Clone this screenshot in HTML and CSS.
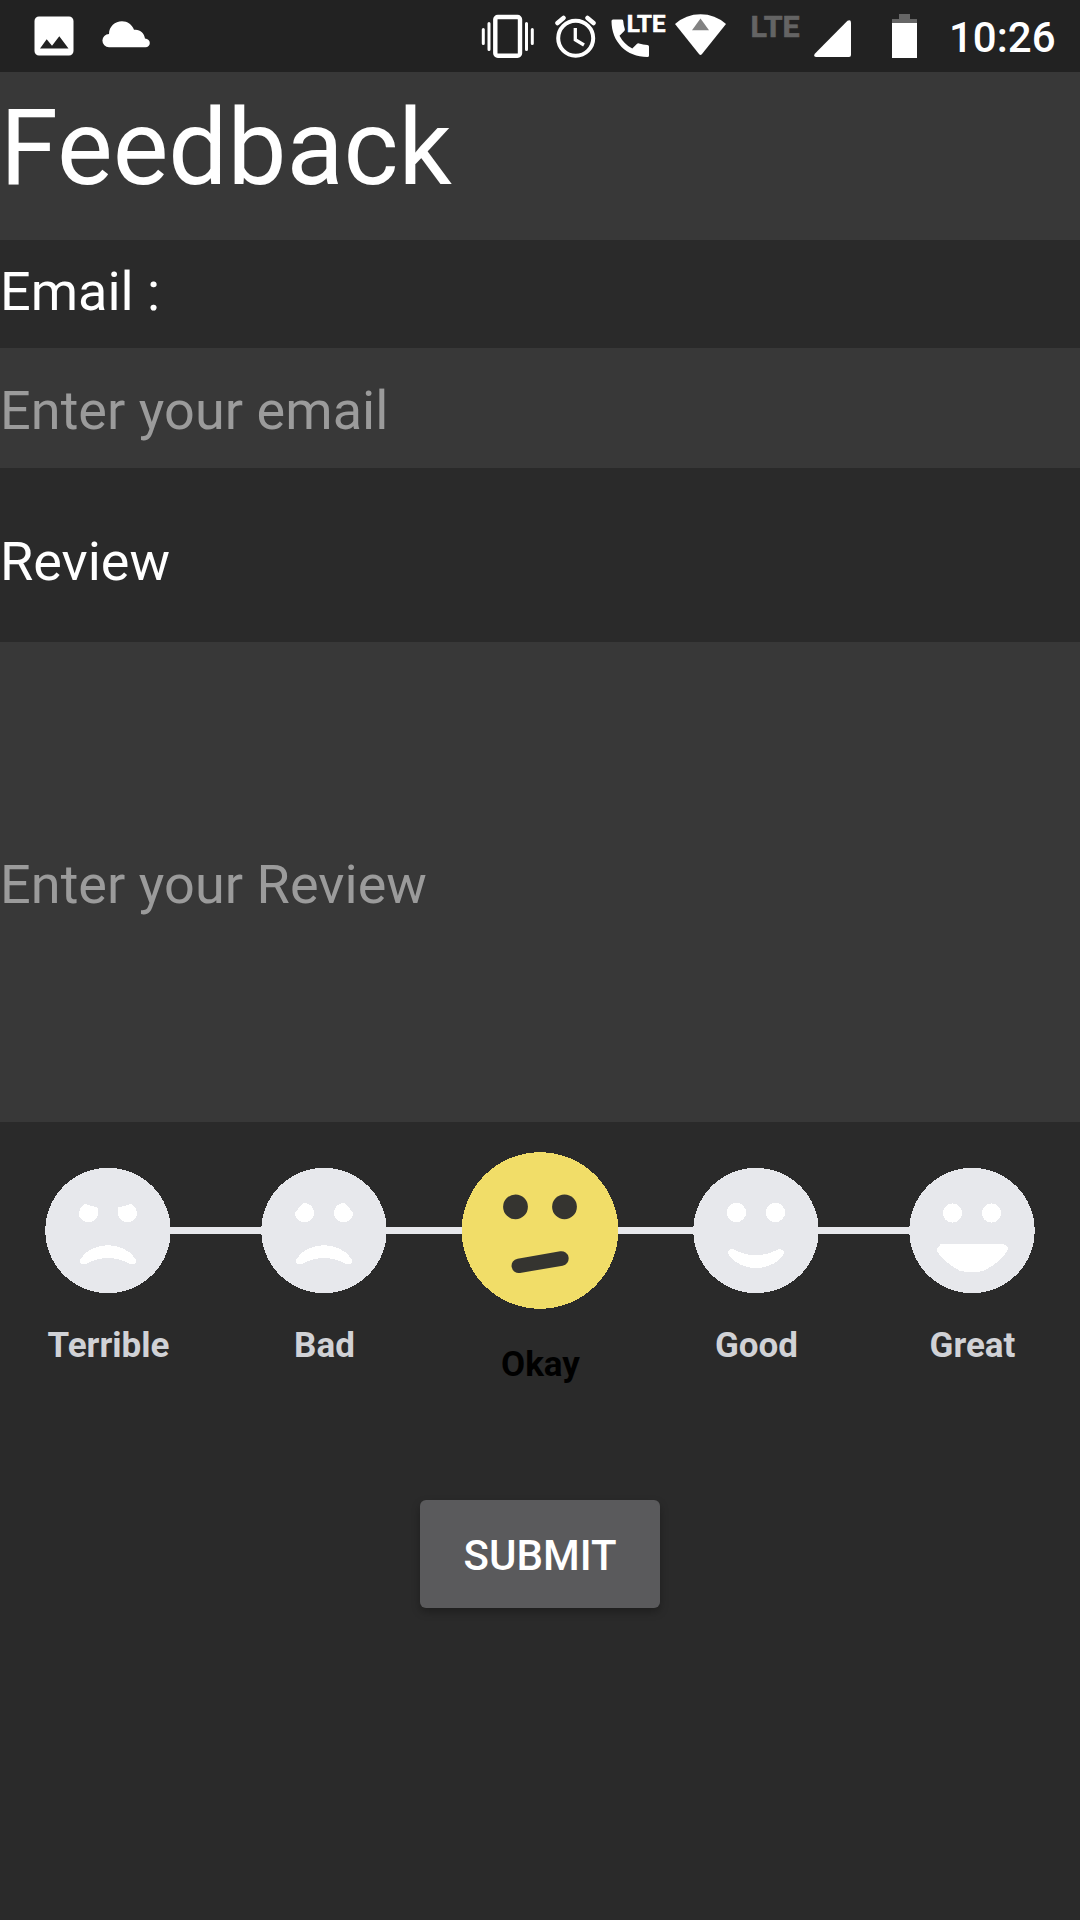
FILE: index.html
```html
<!DOCTYPE html>
<html lang="en">
<head>
<meta charset="utf-8">
<title>Feedback</title>
<link rel="stylesheet" href="styles.css">
</head>
<body>
<header class="status">
  <div class="status-left">
    <svg width="40" height="40" viewBox="34 16 40 40"><path fill="#fff" fill-rule="evenodd" d="M39 16.500H69a4.500 4.500 0 0 1 4.500 4.500V51a4.500 4.500 0 0 1-4.500 4.500H39a4.500 4.500 0 0 1-4.500-4.500V21a4.500 4.500 0 0 1 4.500-4.500ZM40 48.500H68.500L59.300 36.300 52 45.700 46.700 39.300Z"/></svg>
    <svg width="48" height="27" viewBox="102 21 48 27"><path fill="#fff" d="M109 47.200a6.600 6.600 0 0 1 0-13.200C109 26.500 115 21.300 122 21.300c5.500 0 10 3.200 12 8.500 5.500-1 10.300 3 11 8.800 3 .5 4.800 2 4.800 4.300 0 2.600-1.800 4.300-4.300 4.300Z"/></svg>
  </div>
  <div class="status-right">
    <svg class="vibrate" width="54" height="44" viewBox="481 14 54 44" fill="none" stroke="#fff"><rect x="495.300" y="17" width="24.700" height="38.700" rx="2.500" stroke-width="4.400"/><path stroke-width="3" stroke-linecap="round" d="M483.300 29.500V43.500M489 23.500V49.500M526.500 23.500V49.500M532.300 29.500V43.500"/></svg>
    <svg class="alarm" width="42" height="44" viewBox="555 15 42 44" fill="none" stroke="#fff"><circle cx="575.700" cy="38.200" r="17.500" stroke-width="4"/><path stroke-width="3.300" d="M575.300 28V39.700L584 45"/><path stroke-width="4.500" stroke-linecap="round" d="M557.500 23 563.500 18M587.500 18 593.500 23"/></svg>
    <svg class="call" width="60" height="56" viewBox="611 4 60 56"><path fill="#fff" d="M613 19.500H621.700q1.300 0 1.500 1.300.3 4.400 1.600 8.200.4 1.200-.5 2.100L619.500 35.700q4.500 8.500 12.800 12.900l4.500-4.600q1-1 2.200-.6 4 1.300 8.400 1.500 1.600.2 1.600 1.600V55.500q0 1.500-1.600 1.500C626.500 57 611.500 42 611.500 21q0-1.500 1.500-1.500Z"/><text class="lte" x="626.700" y="32.200" font-size="23" textLength="38.700" lengthAdjust="spacingAndGlyphs" fill="#fff" stroke="#fff">LTE</text></svg>
    <svg class="wifi" width="52" height="43" viewBox="675 14 52 43"><path fill="#fff" d="M675 24Q686 14.300 700.500 14.300T726 24L701.800 54.300q-1.300 1.300-2.600 0Z"/><path fill="#828282" d="M700.500 18.500 709 30.300H692Z"/></svg>
    <svg class="net" width="56" height="46" viewBox="747 4 56 46"><text class="lte" x="750.600" y="36.900" font-size="29" textLength="49" lengthAdjust="spacingAndGlyphs" fill="#646464" stroke="#646464">LTE</text></svg>
    <svg class="signal" width="38" height="38" viewBox="814 20 38 38"><path fill="#fff" d="M847.500 20.800q3.500-1.500 3.500 2V55q0 2-2 2H816q-3-.3-1.200-3.300Z"/></svg>
    <svg class="battery" width="25" height="44" viewBox="892 14 25 44" shape-rendering="crispEdges"><path fill="#666" d="M899 14h11v5h7v4H892v-4h7Z"/><path fill="#fff" d="M892 23h25V58H892Z"/></svg>
    <span class="clock">10:26</span>
  </div>
</header>
<main>
  <h1 class="title">Feedback</h1>
  <label class="label label-email" for="email">Email :</label>
  <input class="field" id="email" type="email" placeholder="Enter your email">
  <label class="label label-review" for="review">Review</label>
  <textarea class="field field-review" id="review" placeholder="Enter your Review"></textarea>
  <section class="rating">
    <div class="option">
      <svg class="face" viewBox="-78 -78.500 156 157"><circle class="disc" r="62.700"/><g class="mark"><path d="M-23-26.500-10.500-23Q-8.500-17.500-11.500-12.500-15-8.200-19.500-8.200-26-8.500-28.500-14-30.500-22-23-26.500ZM23-26.500 10.500-23Q8.500-17.500 11.500-12.500 15-8.200 19.500-8.200 26-8.500 28.500-14 30.500-22 23-26.500Z"/><path d="M-28 29C-22 19-10 14.700 0 14.700S22 19 28 29C28.500 33 26 34.300 22 33.300 14 29 8 27.700 0 27.700S-14 29-22 33.300C-26 34.500-28.500 33-28 29Z"/></g></svg>
      <span class="name">Terrible</span>
    </div>
    <div class="option">
      <svg class="face" viewBox="-78 -78.500 156 157"><circle class="disc" r="62.700"/><g class="mark"><path d="M-21-27.300Q-16-28-12.500-24.500-8-18-11.500-12.500-15-8-19.500-8.200-25-8.200-28-13-29.500-16-28.500-18.500ZM21-27.300Q16-28 12.500-24.500 8-18 11.500-12.500 15-8 19.500-8.200 25-8.200 28-13 29.500-16 28.500-18.500Z"/><path d="M-28 29C-22 19-10 14.700 0 14.700S22 19 28 29C28.500 33 26 34.300 22 33.300 14 29 8 27.700 0 27.700S-14 29-22 33.300C-26 34.500-28.500 33-28 29Z"/></g></svg>
      <span class="name">Bad</span>
    </div>
    <div class="option selected">
      <svg class="face" viewBox="-78 -78.500 156 157"><circle class="disc" r="78.300"/><circle class="eye" cx="-24.500" cy="-23.700" r="12.400"/><circle class="eye" cx="24.500" cy="-23.700" r="12.400"/><path class="mouth" d="M-21.200 35.300 21.400 28"/></svg>
      <span class="name">Okay</span>
    </div>
    <div class="option">
      <svg class="face" viewBox="-78 -78.500 156 157"><circle class="disc" r="62.700"/><g class="mark"><circle cx="-19.500" cy="-18" r="9.600"/><circle cx="19.500" cy="-18" r="9.600"/><path transform="translate(0 52.300) scale(1 -1)" d="M-28 29C-22 19-10 14.700 0 14.700S22 19 28 29C28.500 33 26 34.300 22 33.300 14 29 8 27.700 0 27.700S-14 29-22 33.300C-26 34.500-28.500 33-28 29Z"/></g></svg>
      <span class="name">Good</span>
    </div>
    <div class="option">
      <svg class="face" viewBox="-78 -78.500 156 157"><circle class="disc" r="62.700"/><g class="mark"><circle cx="-19.500" cy="-17.500" r="9.600"/><circle cx="19.500" cy="-17.500" r="9.600"/><path d="M-31.500 13.700H31.500Q36.500 15 35.800 19.500C32 27 22 35 12.500 40 5 42.500-5 42.500-12.500 40-22 35-32 27-35.800 19.500-36.500 15-31.500 13.700Z"/></g></svg>
      <span class="name">Great</span>
    </div>
  </section>
  <button class="submit" type="button">SUBMIT</button>
</main>
</body>
</html>
```
FILE: styles.css
```css
* { box-sizing: border-box; }

body {
  margin: 0;
  height: 1920px;
  background: #2a2a2a;
  color: #fff;
  font-family: Roboto, sans-serif;
  overflow: hidden;
}

svg { display: block; flex: none; }

.status {
  height: 72px;
  background: #222;
  display: flex;
  justify-content: space-between;
}

.status-left {
  display: flex;
  align-items: flex-start;
  gap: 28px;
  padding: 16px 0 0 34px;
}

.status-left svg + svg { margin-top: 5px; }

.status-right {
  display: flex;
  align-items: flex-start;
  padding: 4px 25px 0 0;
}

.vibrate { margin-top: 10px; }
.alarm { margin: 11px 0 0 20px; }
.call { margin-left: 14px; }
.wifi { margin: 10px 0 0 4px; }
.net { margin-left: 20px; }
.signal { margin: 16px 0 0 11px; }
.battery { margin: 10px 0 0 40px; }

.lte { font-family: Roboto, sans-serif; font-weight: 700; stroke-width: .6px; }

.clock {
  width: 106px;
  margin: 10px 0 0 32px;
  font-size: 42px;
  font-weight: 500;
  line-height: 48px;
}

main {
  display: flex;
  flex-direction: column;
}

.title {
  margin: 0;
  height: 168px;
  background: #383838;
  font-size: 105px;
  font-weight: 400;
  line-height: 154px;
}

.label { font-size: 54px; }
.label-email { height: 108px; line-height: 103px; }
.label-review { height: 174px; line-height: 187px; }

.field {
  display: block;
  width: 100%;
  height: 120px;
  margin: 0;
  padding: 4px 0 0;
  border: 0;
  border-radius: 0;
  outline: 0;
  resize: none;
  background: #383838;
  color: #fff;
  font: 54px/64px Roboto, sans-serif;
  letter-spacing: .06px;
}

.field::placeholder { color: #9b9b9b; opacity: 1; }

.field-review { height: 480px; padding-top: 211px; }

.rating {
  position: relative;
  display: grid;
  grid-template-columns: repeat(5, 1fr);
  height: 300px;
  padding-top: 30px;
}

/* Connecting line behind the faces */
.rating::before {
  content: "";
  position: absolute;
  top: 105px;
  left: 10%;
  right: 10%;
  height: 7px;
  background: #e7e8ec;
}

.option {
  position: relative;
  display: flex;
  flex-direction: column;
  align-items: center;
}

.face { width: 156px; height: 157px; }
.disc { fill: #e7e8ec; shape-rendering: crispEdges; }
.mark { fill: #fff; shape-rendering: crispEdges; }

.name {
  margin-top: 17px;
  padding-left: 1px;
  font-size: 35px;
  font-weight: 700;
  line-height: 40px;
  color: #d1d2d6;
}

.selected .disc { fill: #f1dd68; }
.selected .eye { fill: #353430; }
.selected .mouth { fill: none; stroke: #353430; stroke-width: 14.5px; stroke-linecap: round; }
.selected .name { margin-top: 36px; color: #000; }

.submit {
  align-self: center;
  width: 240px;
  height: 108px;
  margin-top: 78px;
  padding: 4px 0 0;
  border: 0;
  border-radius: 6px;
  background: #5a5a5c;
  box-shadow: 0 4px 8px rgba(0, 0, 0, .28);
  color: #fff;
  font: 500 42px/48px Roboto, sans-serif;
}
```
